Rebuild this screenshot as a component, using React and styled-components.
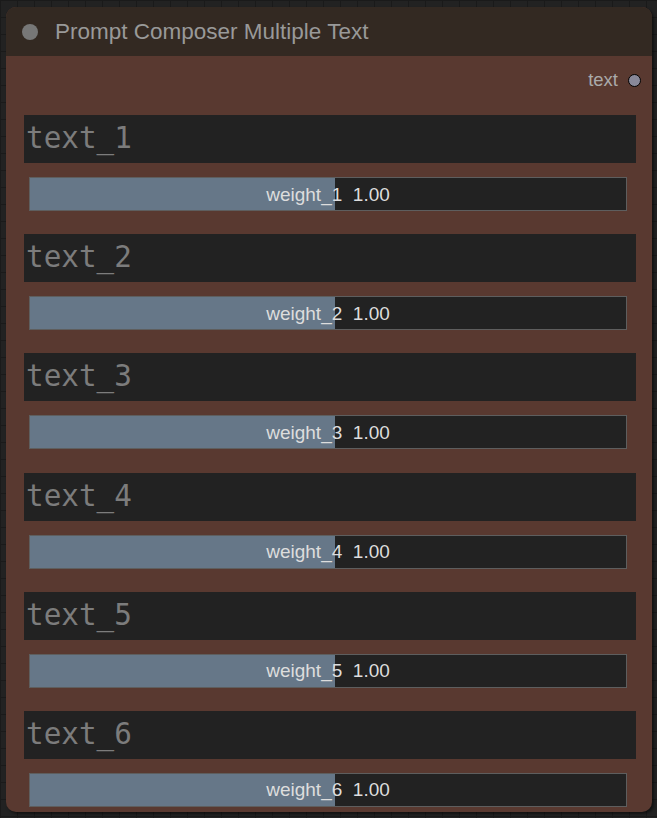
import React from 'react';
import styled, { createGlobalStyle } from 'styled-components';

const GlobalStyle = createGlobalStyle`
  html, body {
    margin: 0;
    padding: 0;
    height: 100%;
  }
  body {
    background-color: #222;
    background-image:
      linear-gradient(to right, #1a1a1a 1px, transparent 1px),
      linear-gradient(to bottom, #1a1a1a 1px, transparent 1px);
    background-size: 17px 17px;
    font-family: 'Liberation Sans', Arial, sans-serif;
  }
`;

const Canvas = styled.div`
  width: 657px;
  height: 818px;
  padding: 7px 0 0 6px;
  box-sizing: border-box;
`;

const Node = styled.div`
  width: 646px;
  background: #593930;
  border-radius: 10px;
  overflow: hidden;
  box-shadow: 2px 2px 3px rgba(0, 0, 0, 0.5);
`;

const TitleBar = styled.div`
  height: 49px;
  background: #332922;
  display: flex;
  align-items: center;
  padding-left: 16px;
  gap: 17px;
  box-sizing: border-box;
`;

const Dot = styled.span`
  width: 16px;
  height: 16px;
  border-radius: 50%;
  background: #777;
  flex-shrink: 0;
`;

const Title = styled.span`
  color: #999;
  font-size: 22.5px;
  line-height: 1;
  margin-top: 1px;
`;

const Body = styled.div`
  padding: 11px 16px 5px 18px;
`;

const OutputRow = styled.div`
  height: 24px;
  display: flex;
  justify-content: flex-end;
  align-items: center;
  gap: 10px;
  margin-right: -5px;
  padding-top: 2px;
  box-sizing: border-box;
`;

const OutputLabel = styled.span`
  color: #aaa;
  font-size: 18.5px;
`;

const Slot = styled.span`
  width: 11px;
  height: 11px;
  border-radius: 50%;
  background: #889;
  border: 1.5px solid #000;
  flex-shrink: 0;
`;

const WidgetList = styled.div`
  margin-top: 24px;
  display: flex;
  flex-direction: column;
  gap: 23.2px;
`;

const Group = styled.div`
  display: flex;
  flex-direction: column;
  gap: 14px;
`;

const TextArea = styled.div`
  height: 48px;
  background: #222;
  color: #7c7c7c;
  font-family: 'DejaVu Sans Mono', 'Liberation Mono', monospace;
  font-size: 29.3px;
  padding: 6px 2px 0;
  box-sizing: border-box;
  line-height: normal;
`;

const Slider = styled.div`
  position: relative;
  height: 34px;
  margin: 0 9px 0 5px;
  background: #222;
  border: 1.5px solid #5e5e5e;
  box-sizing: border-box;
  display: flex;
  align-items: center;
  justify-content: center;
  overflow: hidden;
`;

const Fill = styled.div`
  position: absolute;
  left: 0;
  top: 0;
  bottom: 0;
  background: #678;
`;

const SliderText = styled.span`
  position: relative;
  color: #ddd;
  font-size: 19px;
  white-space: pre;
  margin-top: 1px;
`;

const widgets = [1, 2, 3, 4, 5, 6].map((n) => ({
  text: `text_${n}`,
  label: `weight_${n}`,
  value: 1.0,
  min: 0,
  max: 2
}));

function WeightSlider({ label, value, min, max }) {
  const pct = ((value - min) / (max - min)) * 100;
  return (
    <Slider>
      <Fill style={{ width: `calc(${pct}% + 7px)` }} />
      <SliderText>{`${label}  ${value.toFixed(2)}`}</SliderText>
    </Slider>
  );
}

export default function App() {
  return (
    <>
      <GlobalStyle />
      <Canvas>
        <Node>
          <TitleBar>
            <Dot />
            <Title>Prompt Composer Multiple Text</Title>
          </TitleBar>
          <Body>
            <OutputRow>
              <OutputLabel>text</OutputLabel>
              <Slot />
            </OutputRow>
            <WidgetList>
              {widgets.map((w) => (
                <Group key={w.text}>
                  <TextArea>{w.text}</TextArea>
                  <WeightSlider {...w} />
                </Group>
              ))}
            </WidgetList>
          </Body>
        </Node>
      </Canvas>
    </>
  );
}
